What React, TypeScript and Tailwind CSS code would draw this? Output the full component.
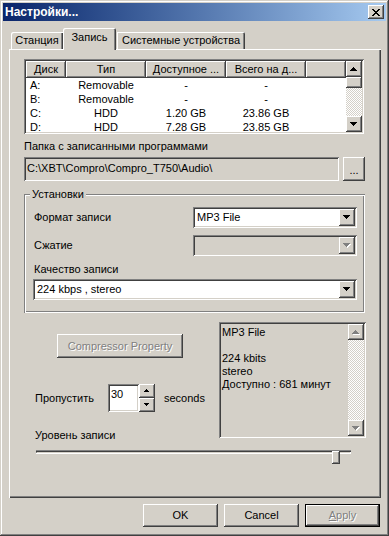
import React from "react";

const raised = "shadow-[inset_-1px_-1px_#404040,inset_1px_1px_#ffffff,inset_-2px_-2px_#808080]";
const sunken = "shadow-[inset_1px_1px_#808080,inset_-1px_-1px_#ffffff,inset_2px_2px_#404040,inset_-2px_-2px_#d4d0c8]";
const etched = "shadow-[inset_1px_1px_#808080,inset_-1px_-1px_#ffffff,inset_2px_2px_#ffffff,inset_-2px_-2px_#808080]";
const disabledText = "text-[#808080] [text-shadow:1px_1px_0_#ffffff]";
const checker =
  "[background-image:conic-gradient(#ffffff_25%,#d4d0c8_0_50%,#ffffff_0_75%,#d4d0c8_0)] [background-size:2px_2px]";

function Tri({ up = false, w = 7, disabled = false }: { up?: boolean; w?: number; disabled?: boolean }) {
  const rows = Math.ceil(w / 2);
  const mk = (color: string, dx: number, dy: number) =>
    Array.from({ length: rows }, (_, i) => {
      const width = w - 2 * i;
      const y = up ? rows - 1 - i : i;
      return <rect key={color + i} x={i + dx} y={y + dy} width={width} height={1} fill={color} />;
    });
  return (
    <svg width={w + 1} height={rows + 1} shapeRendering="crispEdges" className="block">
      {disabled && mk("#ffffff", 1, 1)}
      {mk(disabled ? "#808080" : "#000000", 0, 0)}
    </svg>
  );
}

function ScrollBtn({ up = false, disabled = false }: { up?: boolean; disabled?: boolean }) {
  return (
    <div className={`w-[16px] h-[16px] shrink-0 bg-[#d4d0c8] ${raised} flex items-center justify-center`}>
      <Tri up={up} disabled={disabled} />
    </div>
  );
}

function Combo({ className, value, disabled = false }: { className: string; value?: string; disabled?: boolean }) {
  return (
    <div className={`${className} h-[21px] ${sunken} p-[2px] flex ${disabled ? "bg-[#d4d0c8]" : "bg-white"}`}>
      <div className="flex-1 flex items-center pl-[2px] overflow-hidden whitespace-nowrap">{value}</div>
      <div className={`w-[16px] h-[17px] bg-[#d4d0c8] ${raised} flex items-center justify-center`}>
        <Tri disabled={disabled} />
      </div>
    </div>
  );
}

function Button({ className, children }: { className: string; children: React.ReactNode }) {
  return (
    <div className={`${className} bg-[#d4d0c8] ${raised} flex items-center justify-center`}>{children}</div>
  );
}

const rows = [
  ["A:", "Removable", "-", "-"],
  ["B:", "Removable", "-", "-"],
  ["C:", "HDD", "1.20 GB", "23.86 GB"],
  ["D:", "HDD", "7.28 GB", "23.85 GB"],
];

export default function App() {
  return (
    <div className="w-[389px] h-[536px] bg-[#d4d0c8] p-[3px] shadow-[inset_-1px_-1px_#404040,inset_1px_1px_#d4d0c8,inset_-2px_-2px_#808080,inset_2px_2px_#ffffff] font-['Liberation_Sans',Arial,sans-serif] text-[11px] text-black leading-none overflow-hidden select-none">
      {/* Title bar */}
      <div className="h-[18px] flex items-center justify-between bg-linear-to-r from-[#0a246a] to-[#a6caf0] pl-[2px] pr-[2px]">
        <span className="text-white font-bold text-[12px]">Настройки...</span>
        <div className={`w-[16px] h-[14px] bg-[#d4d0c8] ${raised} flex items-center justify-center`}>
          <svg width="8" height="7" shapeRendering="crispEdges" className="block">
            <path d="M0 0h2v1h-2zM6 0h2v1h-2zM1 1h2v1h-2zM5 1h2v1h-2zM2 2h4v1h-4zM3 3h2v1h-2zM2 4h4v1h-4zM1 5h2v1h-2zM5 5h2v1h-2zM0 6h2v1h-2zM6 6h2v1h-2z" fill="#000" />
          </svg>
        </div>
      </div>

      {/* Tabs */}
      <div className="flex items-end mt-[7px] ml-[8px] h-[21px]">
        <div className="w-[52px] h-[17px] rounded-tl-[2px] shadow-[inset_1px_1px_#ffffff,inset_-1px_0_#404040,inset_-2px_0_#808080] flex items-center justify-center pb-[1px]">
          Станция
        </div>
        <div className="relative z-10 w-[53px] h-[22px] -mb-[1px] bg-[#d4d0c8] rounded-tl-[2px] rounded-tr-[2px] shadow-[inset_1px_1px_#ffffff,inset_-1px_0_#404040,inset_-2px_0_#808080] flex items-center justify-center pb-[4px]">
          Запись
        </div>
        <div className="w-[128px] h-[17px] ml-[1px] rounded-tr-[2px] shadow-[inset_1px_1px_#ffffff,inset_-1px_0_#404040,inset_-2px_0_#808080] flex items-center justify-center pb-[1px]">
          Системные устройства
        </div>
      </div>

      {/* Panel */}
      <div className="ml-[6px] w-[372px] h-[449px] shadow-[inset_1px_1px_#ffffff,inset_-1px_-1px_#404040,inset_-2px_-2px_#808080] pl-[15px] pt-[10px]">
        {/* List view */}
        <div className={`w-[340px] h-[75px] bg-white ${sunken} p-[2px] flex`}>
          <div className="flex-1 flex flex-col overflow-hidden">
            <div className="h-[17px] flex shrink-0 bg-[#d4d0c8]">
              <div className={`w-[40px] ${raised} flex items-center justify-center`}>Диск</div>
              <div className={`w-[80px] ${raised} flex items-center justify-center`}>Тип</div>
              <div className={`w-[80px] ${raised} flex items-center justify-center`}>Доступное ...</div>
              <div className={`w-[80px] ${raised} flex items-center justify-center`}>Всего на д...</div>
              <div className={`flex-1 ${raised}`} />
            </div>
            {rows.map((r) => (
              <div key={r[0]} className="h-[14px] flex shrink-0 items-center">
                <div className="w-[40px] pl-[4px]">{r[0]}</div>
                <div className="w-[80px] text-center">{r[1]}</div>
                <div className="w-[80px] text-center">{r[2]}</div>
                <div className="w-[80px] text-center">{r[3]}</div>
              </div>
            ))}
          </div>
          <div className="w-[16px] flex flex-col">
            <ScrollBtn up />
            <div className={`h-[11px] bg-[#d4d0c8] ${raised}`} />
            <div className={`flex-1 ${checker}`} />
            <ScrollBtn />
          </div>
        </div>

        {/* Folder */}
        <div className="mt-[5px] h-[14px] flex items-center">Папка с записанными программами</div>
        <div className="mt-[4px] flex">
          <div className={`w-[315px] h-[24px] ${sunken} flex items-center pl-[3px] pb-[1px]`}>
            C:\XBT\Compro\Compro_T750\Audio\
          </div>
          <Button className="ml-[4px] w-[22px] h-[24px]">
            <span className="pt-[3px]">...</span>
          </Button>
        </div>

        {/* Group box */}
        <div className={`relative mt-[13px] w-[341px] h-[119px] ${etched} pl-[9px] pt-[13px]`}>
          <div className="absolute left-[6px] -top-[6px] px-[2px] bg-[#d4d0c8] h-[13px] flex items-center">Установки</div>
          <div className="flex items-center">
            <div className="w-[160px] pl-[1px]">Формат записи</div>
            <Combo className="w-[164px]" value="MP3 File" />
          </div>
          <div className="flex items-center mt-[7px]">
            <div className="w-[160px] pl-[1px] text-black">Сжатие</div>
            <Combo className="w-[164px]" disabled />
          </div>
          <div className="mt-[6px] h-[14px] flex items-center pl-[1px]">Качество записи</div>
          <Combo className="mt-[3px] w-[324px]" value="224 kbps , stereo" />
        </div>

        {/* Lower section */}
        <div className="flex">
          <div className="w-[195px] flex flex-col">
            <Button className="mt-[21px] ml-[33px] w-[126px] h-[24px]">
              <span className={disabledText}>Compressor Property</span>
            </Button>
            <div className="mt-[26px] flex items-center ml-[11px] h-[28px]">
              <div className="w-[73px]">Пропустить</div>
              <div className={`w-[31px] h-[28px] bg-white ${sunken} pl-[3px] pt-[5px]`}>30</div>
              <div className="flex flex-col">
                <div className={`w-[16px] h-[14px] bg-[#d4d0c8] ${raised} flex items-center justify-center`}>
                  <Tri up w={5} />
                </div>
                <div className={`w-[16px] h-[14px] bg-[#d4d0c8] ${raised} flex items-center justify-center`}>
                  <Tri w={5} />
                </div>
              </div>
              <div className="ml-[9px]">seconds</div>
            </div>
            <div className="mt-[16px] h-[14px] flex items-center ml-[11px]">Уровень записи</div>
          </div>
          <div className={`mt-[9px] w-[147px] h-[116px] ${sunken} p-[2px] flex`}>
            <div className="flex-1 pl-[1px] pt-[2px] leading-[13px]">
              <div>MP3 File</div>
              <div>&nbsp;</div>
              <div>224 kbits</div>
              <div>stereo</div>
              <div>Доступно : 681 минут</div>
            </div>
            <div className="w-[16px] flex flex-col">
              <ScrollBtn up disabled />
              <div className={`flex-1 ${checker}`} />
              <ScrollBtn disabled />
            </div>
          </div>
        </div>

        {/* Slider */}
        <div className="relative mt-[8px] ml-[12px] w-[315px] h-[14px]">
          <div className="mt-[4px] h-[4px] shadow-[inset_0_1px_#808080,inset_0_2px_#404040,inset_0_-1px_#ffffff,inset_1px_0_#808080,inset_-1px_0_#ffffff]" />
          <div className={`absolute left-[296px] top-[1px] w-[8px] h-[13px] bg-[#d4d0c8] ${raised}`} />
        </div>
      </div>

      {/* Bottom buttons */}
      <div className="mt-[6px] flex justify-end gap-[6px] pr-[6px]">
        <Button className="w-[75px] h-[23px]">OK</Button>
        <Button className="w-[75px] h-[23px]">Cancel</Button>
        <div className="w-[75px] h-[23px] bg-[#d4d0c8] shadow-[inset_0_0_0_1px_#000000,inset_-2px_-2px_#404040,inset_2px_2px_#ffffff,inset_-3px_-3px_#808080] flex items-center justify-center">
          <span className={disabledText}>
            <span className="underline">A</span>pply
          </span>
        </div>
      </div>
    </div>
  );
}
